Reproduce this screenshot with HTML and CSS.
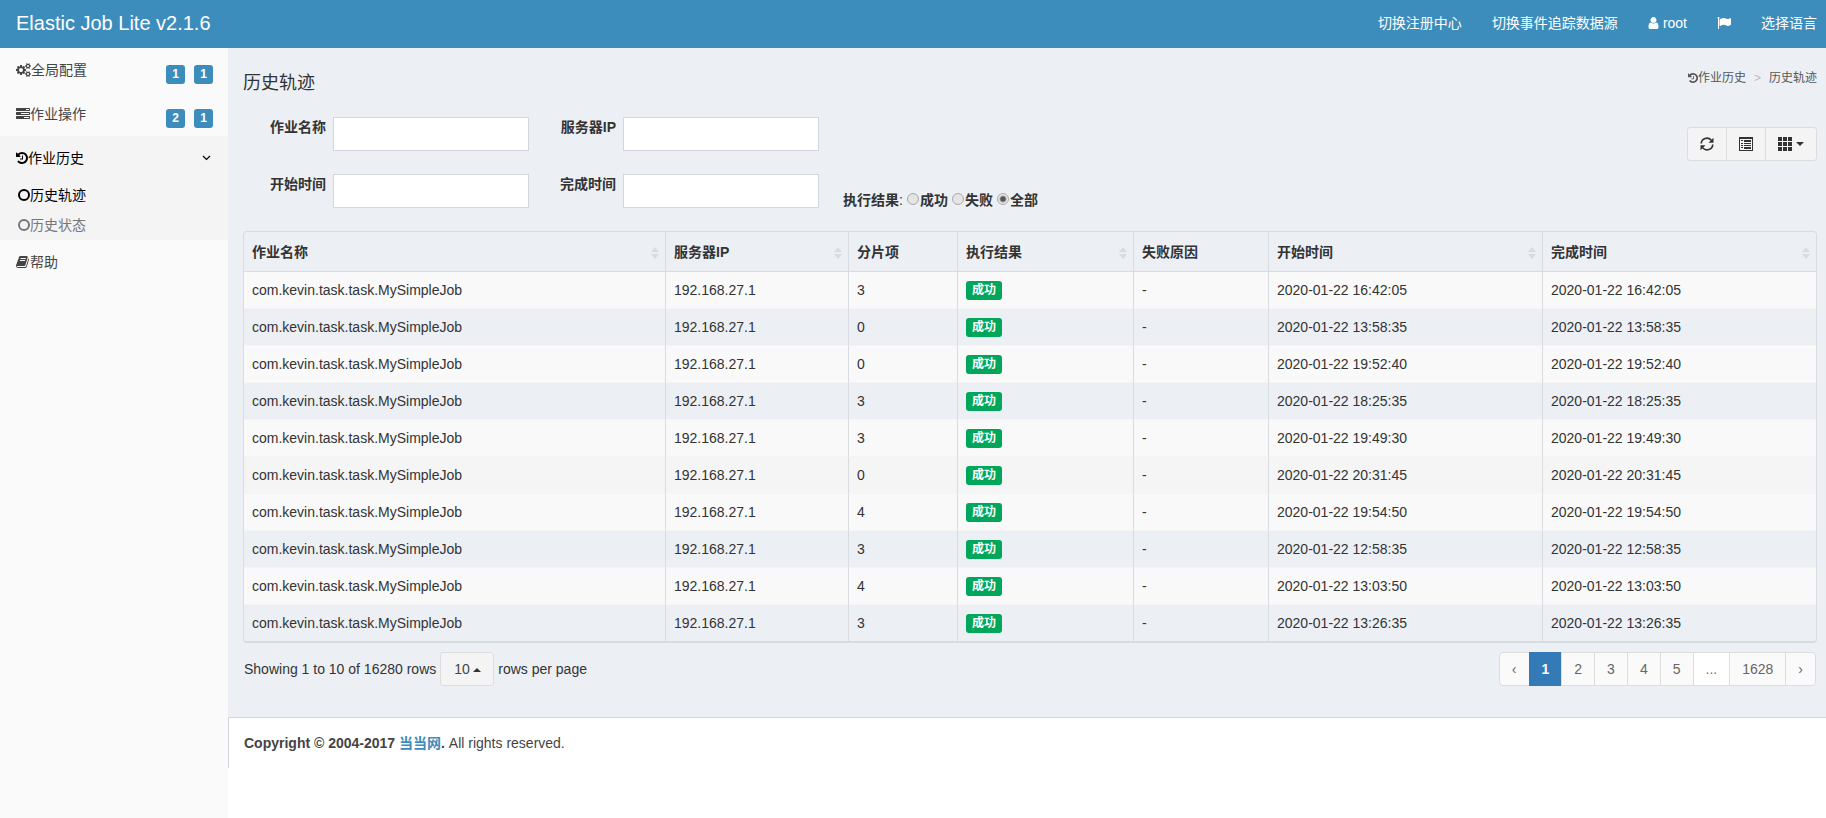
FILE: index.html
```html
<!DOCTYPE html>
<html lang="zh-CN">
<head>
    <meta charset="utf-8">
    <title>Elastic Job Lite</title>
    <link rel="stylesheet" href="styles.css">
</head>
<body>
    <svg class="sprite" aria-hidden="true">
        <symbol id="icon-history" viewBox="0 0 1792 1792"><path d="M1664 896q0 156-61 298t-164 245-245 164-298 61q-172 0-327-72.5t-264-204.5q-7-10-6.5-22.5t8.5-20.5l137-138q10-9 25-9 16 2 23 12 73 95 179 147t225 52q104 0 198.5-40.5t163.5-109.5 109.5-163.5 40.5-198.5-40.5-198.5-109.5-163.5-163.5-109.5-198.5-40.5q-98 0-188 35.5t-160 101.5l137 138q31 30 14 69-17 40-59 40h-448q-26 0-45-19t-19-45v-448q0-42 40-59 39-17 69 14l130 129q107-101 244.5-156.5t284.5-55.5q156 0 298 61t245 164 164 245 61 298zm-640-288v448q0 14-9 23t-23 9h-320q-14 0-23-9t-9-23v-64q0-14 9-23t23-9h224v-352q0-14 9-23t23-9h64q14 0 23 9t9 23z"/></symbol>
        <symbol id="icon-circle" viewBox="0 0 12 12"><circle cx="6" cy="6" r="5" fill="none" stroke="currentColor" stroke-width="2"/></symbol>
    </svg>

    <header class="main-header">
        <a class="logo" href="#">Elastic Job Lite v2.1.6</a>
        <nav class="top-nav">
            <a href="#">切换注册中心</a>
            <a href="#">切换事件追踪数据源</a>
            <a href="#"><svg class="icon-user" viewBox="256 0 1280 1792"><path d="M1536 1399q0 109-62.5 187t-150.5 78h-854q-88 0-150.5-78t-62.5-187q0-85 8.5-160.5t31.5-152 58.5-131 94-89 134.5-34.5q131 128 313 128t313-128q76 0 134.5 34.5t94 89 58.5 131 31.5 152 8.5 160.5zm-256-887q0 159-112.5 271.5t-271.5 112.5-271.5-112.5-112.5-271.5 112.5-271.5 271.5-112.5 271.5 112.5 112.5 271.5z"/></svg>root</a>
            <a href="#" aria-label="语言"><svg class="icon" viewBox="0 0 1792 1792"><path d="M320 256q0 72-64 110v1266q0 13-9.5 22.5t-22.5 9.5h-64q-13 0-22.5-9.5t-9.5-22.5v-1266q-64-38-64-110 0-53 37.5-90.5t90.5-37.5 90.5 37.5 37.5 90.5zm1472 64v763q0 25-12.5 38.5t-39.5 27.5q-215 116-369 116-61 0-123.5-22t-108.5-48-115.5-48-142.5-22q-192 0-464 146-17 9-33 9-26 0-45-19t-19-45v-742q0-32 31-55 21-14 79-43 236-120 421-120 107 0 200 29t219 88q38 19 88 19 54 0 117.5-21t110-47 88-47 54.5-21q26 0 45 19t19 45z"/></svg></a>
            <a href="#">选择语言</a>
        </nav>
    </header>

    <div class="wrapper">
        <aside class="sidebar">
            <a class="menu-item" href="#">
                <svg class="icon-cogs" viewBox="0 0 1920 1792"><path d="M896 896q0-106-75-181t-181-75-181 75-75 181 75 181 181 75 181-75 75-181zm768 512q0-52-38-90t-90-38-90 38-38 90q0 53 37.5 90.5t90.5 37.5 90.5-37.5 37.5-90.5zm0-1024q0-52-38-90t-90-38-90 38-38 90q0 53 37.5 90.5t90.5 37.5 90.5-37.5 37.5-90.5zm-384 421v185q0 10-7 19.5t-16 10.5l-155 24q-11 35-32 76 34 48 90 115 7 11 7 20 0 12-7 19-23 30-82.5 89.5t-78.5 59.5q-11 0-21-7l-115-90q-37 19-77 31-11 108-23 155-7 24-30 24h-186q-11 0-20-7.5t-10-17.5l-23-153q-34-10-75-31l-118 89q-7 7-20 7-11 0-21-8-144-133-144-160 0-9 7-19 10-14 41-53t47-61q-23-44-35-82l-152-24q-10-1-17-9.5t-7-19.5v-185q0-10 7-19.5t16-10.5l155-24q11-35 32-76-34-48-90-115-7-11-7-20 0-12 7-20 22-30 82-89t79-59q11 0 21 7l115 90q34-18 77-32 11-108 23-154 7-24 30-24h186q11 0 20 7.5t10 17.5l23 153q34 10 75 31l118-89q8-7 20-7 11 0 21 8 144 133 144 160 0 8-7 19-12 16-42 54t-45 60q23 48 34 82l152 23q10 2 17 10.5t7 19.5zm640 533v140q0 16-149 31-12 27-30 52 51 113 51 138 0 4-4 7-122 71-124 71-8 0-46-47t-52-68q-20 2-30 2t-30-2q-14 21-52 68t-46 47q-2 0-124-71-4-3-4-7 0-25 51-138-18-25-30-52-149-15-149-31v-140q0-16 149-31 13-29 30-52-51-113-51-138 0-4 4-7 4-2 35-20t59-34 30-16q8 0 46 46.5t52 67.5q20-2 30-2t30 2q51-71 92-112l6-2q4 0 124 70 4 3 4 7 0 25-51 138 17 23 30 52 149 15 149 31zm0-1024v140q0 16-149 31-12 27-30 52 51 113 51 138 0 4-4 7-122 71-124 71-8 0-46-47t-52-68q-20 2-30 2t-30-2q-14 21-52 68t-46 47q-2 0-124-71-4-3-4-7 0-25 51-138-18-25-30-52-149-15-149-31v-140q0-16 149-31 13-29 30-52-51-113-51-138 0-4 4-7 4-2 35-20t59-34 30-16q8 0 46 46.5t52 67.5q20-2 30-2t30 2q51-71 92-112l6-2q4 0 124 70 4 3 4 7 0 25-51 138 17 23 30 52 149 15 149 31z"/></svg>
                <span>全局配置</span>
                <span class="badges"><span class="badge">1</span><span class="badge">1</span></span>
            </a>
            <a class="menu-item" href="#">
                <svg class="icon" viewBox="0 0 1792 1792"><path d="M1024 1408h640v-128h-640v128zm-384-512h1024v-128h-1024v128zm640-512h384v-128h-384v128zm512 832v256q0 26-19 45t-45 19h-1664q-26 0-45-19t-19-45v-256q0-26 19-45t45-19h1664q26 0 45 19t19 45zm0-512v256q0 26-19 45t-45 19h-1664q-26 0-45-19t-19-45v-256q0-26 19-45t45-19h1664q26 0 45 19t19 45zm0-512v256q0 26-19 45t-45 19h-1664q-26 0-45-19t-19-45v-256q0-26 19-45t45-19h1664q26 0 45 19t19 45z"/></svg>
                <span>作业操作</span>
                <span class="badges"><span class="badge">2</span><span class="badge">1</span></span>
            </a>
            <div class="menu-open">
                <a class="menu-item active" href="#">
                    <svg class="icon-narrow" viewBox="128 0 1536 1792"><use href="#icon-history" width="1792" height="1792"/></svg>
                    <span>作业历史</span>
                    <svg class="chevron" viewBox="0 0 9 6"><path d="M1 1l3.500 3.500L8 1" fill="none" stroke="currentColor" stroke-width="1.200"/></svg>
                </a>
                <a class="sub-item active" href="#"><svg class="icon-narrow"><use href="#icon-circle"/></svg>历史轨迹</a>
                <a class="sub-item" href="#"><svg class="icon-narrow"><use href="#icon-circle"/></svg>历史状态</a>
            </div>
            <a class="menu-item" href="#">
                <svg class="icon" viewBox="64 0 1664 1792"><path d="M1639 478q40 57 18 129l-275 906q-19 64-76.500 107.500t-122.500 43.500h-923q-77 0-148.500-53.500t-99.500-131.500q-24-67-2-127 0-4 3-27t4-37q1-8-3-21.500t-3-19.500q2-11 8-21t16.500-23.500 16.500-23.500q23-38 45-91.500t30-91.500q3-10 .5-30t-.5-28q3-11 17-28t17-23q21-36 42-92t25-90q1-9-2.500-32t.5-28q4-13 22-30.500t22-22.500q19-26 42.500-84.500t27.500-96.500q1-8-3-25.500t-2-26.500q2-8 9-18t18-23 17-21q8-12 16.500-30.500t15-35 16-36 19.500-32 26.500-23.500 36-11.500 47.500 5.500l-1 3q38-9 51-9h761q74 0 114 56t18 130l-274 906q-36 119-71.500 153.500t-128.500 34.500h-869q-27 0-38 15-11 16-1 43 24 70 144 70h923q29 0 56-15.500t35-41.500l300-987q7-22 5-57 38 15 59 43zm-1064 2q-4 13 2 22.500t20 9.500h608q13 0 25.500-9.500t16.500-22.500l21-64q4-13-2-22.500t-20-9.500h-608q-13 0-25.500 9.500t-16.500 22.500zm-83 256q-4 13 2 22.500t20 9.500h608q13 0 25.500-9.500t16.500-22.500l21-64q4-13-2-22.500t-20-9.500h-608q-13 0-25.500 9.500t-16.500 22.500z"/></svg>
                <span>帮助</span>
            </a>
        </aside>

        <div class="main">
            <main class="content">
                <div class="content-header">
                    <h1>历史轨迹</h1>
                    <nav class="breadcrumb">
                        <a href="#"><svg viewBox="128 0 1536 1792"><use href="#icon-history" width="1792" height="1792"/></svg>作业历史</a>
                        <span class="sep">&gt;</span>
                        <span>历史轨迹</span>
                    </nav>
                </div>

                <div class="toolbar">
                    <form class="search">
                        <div class="field">
                            <label for="job-name">作业名称</label>
                            <input type="text" id="job-name">
                        </div>
                        <div class="field">
                            <label for="ip">服务器IP</label>
                            <input type="text" id="ip">
                        </div>
                        <div class="field start">
                            <label for="start-time">开始时间</label>
                            <input type="text" id="start-time">
                        </div>
                        <div class="field">
                            <label for="end-time">完成时间</label>
                            <input type="text" id="end-time">
                        </div>
                        <div class="result" role="radiogroup" aria-label="执行结果">
                            <span><b>执行结果</b>:</span>
                            <label><input type="radio" name="result">成功</label>
                            <label><input type="radio" name="result">失败</label>
                            <label><input type="radio" name="result" checked>全部</label>
                        </div>
                    </form>
                    <div class="btn-group">
                        <button type="button" title="刷新">
                            <svg class="icon" viewBox="0 0 14 14"><g fill="none" stroke="currentColor" stroke-width="1.600"><path d="M1.200 6.500A5.700 5.700 0 0 1 11.300 3.300"/><path d="M12.800 7.500A5.700 5.700 0 0 1 2.700 10.700"/></g><path d="M13.500.8v5H8.500zM.5 13.200v-5h5z"/></svg>
                        </button>
                        <button type="button" title="切换">
                            <svg class="icon" viewBox="0 0 14 14"><path d="M0 0h14v14H0zM1 2v11h12V2z" fill-rule="evenodd"/><path d="M2 3h2v1H2zM5 3h7v2H5zM2 6h2v1H2zM5 6h7v1H5zM2 8h2v1H2zM5 8h7v1H5zM2 10h2v1H2zM5 10h7v2H5z"/></svg>
                        </button>
                        <button type="button" title="列">
                            <svg class="icon" viewBox="0 0 14 14"><path d="M0 0h4v4H0zM5 0h4v4H5zM10 0h4v4h-4zM0 5h4v4H0zM5 5h4v4H5zM10 5h4v4h-4zM0 10h4v4H0zM5 10h4v4H5zM10 10h4v4h-4z"/></svg>
                            <span class="caret"></span>
                        </button>
                    </div>
                </div>

                <div class="table-box">
                    <table>
                        <colgroup>
                            <col class="col-job">
                            <col class="col-ip">
                            <col class="col-item">
                            <col class="col-result">
                            <col class="col-reason">
                            <col class="col-time">
                            <col class="col-time">
                        </colgroup>
                        <thead>
                            <tr>
                                <th><div class="sortable">作业名称</div></th>
                                <th><div class="sortable">服务器IP</div></th>
                                <th>分片项</th>
                                <th><div class="sortable">执行结果</div></th>
                                <th>失败原因</th>
                                <th><div class="sortable">开始时间</div></th>
                                <th><div class="sortable">完成时间</div></th>
                            </tr>
                        </thead>
                        <tbody>
                            <tr><td>com.kevin.task.task.MySimpleJob</td><td>192.168.27.1</td><td>3</td><td><span class="label">成功</span></td><td>-</td><td>2020-01-22 16:42:05</td><td>2020-01-22 16:42:05</td></tr>
                            <tr><td>com.kevin.task.task.MySimpleJob</td><td>192.168.27.1</td><td>0</td><td><span class="label">成功</span></td><td>-</td><td>2020-01-22 13:58:35</td><td>2020-01-22 13:58:35</td></tr>
                            <tr><td>com.kevin.task.task.MySimpleJob</td><td>192.168.27.1</td><td>0</td><td><span class="label">成功</span></td><td>-</td><td>2020-01-22 19:52:40</td><td>2020-01-22 19:52:40</td></tr>
                            <tr><td>com.kevin.task.task.MySimpleJob</td><td>192.168.27.1</td><td>3</td><td><span class="label">成功</span></td><td>-</td><td>2020-01-22 18:25:35</td><td>2020-01-22 18:25:35</td></tr>
                            <tr><td>com.kevin.task.task.MySimpleJob</td><td>192.168.27.1</td><td>3</td><td><span class="label">成功</span></td><td>-</td><td>2020-01-22 19:49:30</td><td>2020-01-22 19:49:30</td></tr>
                            <tr class="hover"><td>com.kevin.task.task.MySimpleJob</td><td>192.168.27.1</td><td>0</td><td><span class="label">成功</span></td><td>-</td><td>2020-01-22 20:31:45</td><td>2020-01-22 20:31:45</td></tr>
                            <tr><td>com.kevin.task.task.MySimpleJob</td><td>192.168.27.1</td><td>4</td><td><span class="label">成功</span></td><td>-</td><td>2020-01-22 19:54:50</td><td>2020-01-22 19:54:50</td></tr>
                            <tr><td>com.kevin.task.task.MySimpleJob</td><td>192.168.27.1</td><td>3</td><td><span class="label">成功</span></td><td>-</td><td>2020-01-22 12:58:35</td><td>2020-01-22 12:58:35</td></tr>
                            <tr><td>com.kevin.task.task.MySimpleJob</td><td>192.168.27.1</td><td>4</td><td><span class="label">成功</span></td><td>-</td><td>2020-01-22 13:03:50</td><td>2020-01-22 13:03:50</td></tr>
                            <tr><td>com.kevin.task.task.MySimpleJob</td><td>192.168.27.1</td><td>3</td><td><span class="label">成功</span></td><td>-</td><td>2020-01-22 13:26:35</td><td>2020-01-22 13:26:35</td></tr>
                        </tbody>
                    </table>
                </div>

                <div class="table-footer">
                    <div class="page-info">
                        <span>Showing 1 to 10 of 16280 rows</span>
                        <span class="page-size">
                            <select id="page-size" aria-label="rows per page">
                                <option>10</option>
                                <option>25</option>
                                <option>50</option>
                                <option>100</option>
                            </select>
                            <span class="caret up"></span>
                        </span>
                        <label for="page-size">rows per page</label>
                    </div>
                    <nav class="pagination">
                        <a href="#">‹</a>
                        <a class="current" href="#">1</a>
                        <a href="#">2</a>
                        <a href="#">3</a>
                        <a href="#">4</a>
                        <a href="#">5</a>
                        <span>...</span>
                        <a href="#">1628</a>
                        <a href="#">›</a>
                    </nav>
                </div>
            </main>

            <footer class="main-footer">
                <strong>Copyright © 2004-2017 <a href="#">当当网</a>.</strong> All rights reserved.
            </footer>
        </div>
    </div>
</body>
</html>
```

FILE: styles.css
```css
* {
    box-sizing: border-box;
}

body {
    margin: 0;
    min-height: 100vh;
    display: flex;
    flex-direction: column;
    font-family: "Liberation Sans", "Noto Sans CJK SC", sans-serif;
    font-size: 14px;
    line-height: 20px;
    color: #333;
    background: #fff;
}

a {
    color: inherit;
    text-decoration: none;
}

svg {
    display: block;
    flex: none;
    fill: currentColor;
}

.sprite {
    position: absolute;
    width: 0;
    height: 0;
}

.icon {
    width: 14px;
    height: 14px;
}

.icon-narrow {
    width: 12px;
    height: 14px;
}

.icon-cogs {
    width: 15px;
    height: 14px;
}

/* header */
.main-header {
    display: flex;
    justify-content: space-between;
    align-items: center;
    height: 48px;
    padding: 0 9px 2px 16px;
    background: #3c8dbc;
    color: #fff;
}

.logo {
    font-size: 20px;
}

.top-nav {
    display: flex;
    align-items: center;
    gap: 30px;
}

.top-nav a {
    display: flex;
    align-items: center;
}

.icon-user {
    width: 11px;
    height: 14px;
    margin-right: 4px;
}

.wrapper {
    flex: 1;
    display: flex;
}

/* sidebar */
.sidebar {
    flex: none;
    width: 228px;
    background: #fafafb;
    color: #444;
}

.menu-item {
    display: flex;
    align-items: center;
    height: 44px;
    padding: 0 15px 0 16px;
}

.menu-item.active,
.sub-item.active {
    color: #000;
}

.badges {
    display: flex;
    gap: 9px;
    margin-left: auto;
    padding-top: 8px;
}

.badge {
    width: 19px;
    border-radius: 3px;
    background: #3c8dbc;
    color: #fff;
    font-size: 12px;
    font-weight: bold;
    line-height: 19px;
    text-align: center;
}

.menu-open {
    background: #f4f4f5;
}

.chevron {
    width: 9px;
    height: 6px;
    margin-left: auto;
    margin-right: 2px;
}

.sub-item {
    display: flex;
    align-items: center;
    height: 30px;
    padding-left: 18px;
    color: #777;
}

/* content */
.main {
    flex: 1;
    min-width: 0;
}

.content {
    padding: 15px 9px 31px 15px;
    background: #ecf0f5;
}

.content-header {
    display: flex;
    justify-content: space-between;
    height: 54px;
}

.content-header h1 {
    margin: 0;
    padding-top: 10px;
    font-size: 18px;
    font-weight: normal;
}

.breadcrumb {
    display: flex;
    align-items: center;
    gap: 8px;
    height: 30px;
    font-size: 12px;
    color: #555;
}

.breadcrumb a {
    display: flex;
    align-items: center;
}

.breadcrumb svg {
    width: 10px;
    height: 12px;
}

.breadcrumb .sep {
    color: #bbb;
}

.toolbar {
    display: flex;
    justify-content: space-between;
    align-items: flex-start;
    margin-bottom: 23px;
}

.search {
    display: grid;
    grid-template-columns: auto auto auto;
    gap: 23px 4px;
}

.field {
    display: flex;
    gap: 7px;
}

.field label {
    width: 83px;
    font-weight: bold;
    text-align: right;
}

.field input {
    width: 196px;
    height: 34px;
    padding: 6px 12px;
    border: 1px solid #d2d6de;
    background: #fff;
    font: inherit;
}

.field.start {
    grid-column: 1;
}

.result {
    display: flex;
    align-self: end;
    gap: 4px;
    padding-left: 20px;
    line-height: 16px;
}

.result label {
    display: flex;
    align-items: center;
    font-weight: bold;
}

.result input {
    appearance: none;
    width: 12px;
    height: 12px;
    margin: 0 1px 2px 0;
    border: 1px solid #aaa;
    border-radius: 50%;
    background: #e4e4e4;
}

.result input:checked {
    background: radial-gradient(circle, #555 2px, #e9e9e9 4px);
}

.btn-group {
    display: flex;
    margin-top: 10px;
}

.btn-group button {
    display: flex;
    align-items: center;
    gap: 4px;
    height: 34px;
    margin-left: -1px;
    padding: 0 12px;
    border: 1px solid #ddd;
    background: #f4f4f4;
    color: #333;
    cursor: pointer;
}

.btn-group button:first-child {
    border-radius: 3px 0 0 3px;
}

.btn-group button:last-child {
    border-radius: 0 3px 3px 0;
}

.caret {
    border-top: 4px solid #333;
    border-left: 4px solid transparent;
    border-right: 4px solid transparent;
}

.caret.up {
    border-top: 0;
    border-bottom: 4px solid #333;
}

/* table */
.table-box {
    border: 1px solid #d8dbe0;
    border-bottom-width: 2px;
    border-radius: 4px;
}

table {
    width: 100%;
    border-spacing: 0;
}

.col-job { width: 421px; }
.col-ip { width: 183px; }
.col-item { width: 109px; }
.col-result { width: 176px; }
.col-reason { width: 135px; }
.col-time { width: 274px; }

th,
td {
    border-left: 1px solid #d8dbe0;
    text-align: left;
}

th:first-child,
td:first-child {
    border-left: 0;
}

th {
    padding: 10px 8px 9px;
}

td {
    padding: 8px;
    border-top: 1px solid #f4f4f4;
}

tbody tr:first-child td {
    border-top-color: #d8dbe0;
}

tbody tr:nth-child(odd) {
    background: #f9f9f9;
}

tbody tr.hover,
tbody tr:hover {
    background: #f5f5f5;
}

.sortable {
    position: relative;
}

.sortable::before,
.sortable::after {
    content: "";
    position: absolute;
    right: -2px;
    border-left: 4px solid transparent;
    border-right: 4px solid transparent;
}

.sortable::before {
    top: 5px;
    border-bottom: 5px solid #d8dbe0;
}

.sortable::after {
    bottom: 3px;
    border-top: 5px solid #d8dbe0;
}

.label {
    display: block;
    width: fit-content;
    padding: 0 6px;
    border-radius: 3px;
    background: #00a65a;
    color: #fff;
    font-size: 12px;
    font-weight: bold;
    line-height: 19px;
}

/* pagination */
.table-footer {
    display: flex;
    justify-content: space-between;
    align-items: center;
    padding: 9px 1px 0;
}

.page-info {
    display: flex;
    align-items: center;
    gap: 4px;
}

.page-size {
    position: relative;
}

.page-size select {
    appearance: none;
    display: block;
    width: 54px;
    height: 34px;
    padding: 0 13px;
    border: 1px solid #ddd;
    border-radius: 3px;
    background: #f4f4f4;
    color: #444;
    font: inherit;
}

.page-size .caret {
    position: absolute;
    top: 16px;
    right: 13px;
}

.pagination {
    display: flex;
}

.pagination a,
.pagination span {
    margin-left: -1px;
    padding: 6px 12px;
    border: 1px solid #ddd;
    background: #fafafa;
    color: #666;
}

.pagination span {
    background: #fff;
    color: #777;
}

.pagination a:first-child {
    border-radius: 4px 0 0 4px;
}

.pagination a:last-child {
    border-radius: 0 4px 4px 0;
}

.pagination .current {
    border-color: #337ab7;
    background: #337ab7;
    color: #fff;
    font-weight: bold;
}

/* footer */
.main-footer {
    padding: 15px;
    border-top: 1px solid #d2d6de;
    border-left: 1px solid #d2d6de;
    color: #444;
}

.main-footer a {
    color: #3c8dbc;
}
```
